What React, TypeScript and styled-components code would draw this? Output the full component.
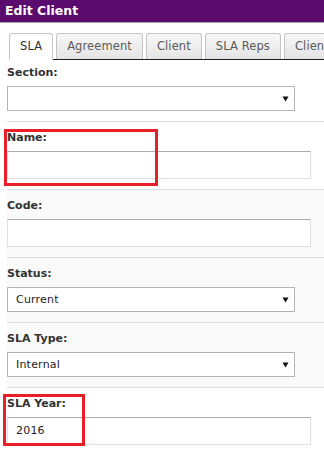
import React from 'react';
import styled, { createGlobalStyle } from 'styled-components';

const GlobalStyle = createGlobalStyle`
	body {
		margin: 0;
		background: #ffffff;
		font-family: 'DejaVu Sans', Verdana, sans-serif;
	}
`;

const Page = styled.div`
	width: 324px;
	height: 450px;
	overflow: hidden;
	background: #ffffff;
`;

const Header = styled.div`
	height: 22px;
	line-height: 22px;
	padding-left: 5px;
	background: #5a0b6e;
	border-bottom: 1px solid #a8a8a8;
	color: #ffffff;
	font-size: 12.5px;
	font-weight: bold;
`;

const TabBar = styled.div`
	display: flex;
	margin: 10px 0 0 9px;
	border-bottom: 1px solid #1e1e1e;
	white-space: nowrap;
`;

const Tab = styled.div<{ $active?: boolean }>`
	flex-shrink: 0;
	box-sizing: border-box;
	height: ${p => (p.$active ? '27px' : '26px')};
	margin-right: 3px;
	margin-bottom: ${p => (p.$active ? '-1px' : '0')};
	padding: 0 10px;
	line-height: 25px;
	font-size: 11.5px;
	letter-spacing: 0.1px;
	color: ${p => (p.$active ? '#333333' : '#5a5a5a')};
	background: ${p =>
		p.$active ? '#ffffff' : 'linear-gradient(#f7f7f7, #e4e4e4)'};
	border: 1px solid #c4c4c4;
	border-bottom: ${p => (p.$active ? '1px solid #ffffff' : 'none')};
	border-radius: 3px 3px 0 0;
`;

const Form = styled.div`
	padding-left: 7px;
`;

const Field = styled.div<{ $first?: boolean; $shade?: boolean }>`
	position: relative;
	padding: ${p => (p.$first ? '6px' : '9px')} 0 10px 0;
	border-bottom: 1px solid #dedede;
	background: ${p => (p.$shade ? '#fafafa' : '#ffffff')};
`;

const Label = styled.div`
	height: 14px;
	line-height: 14px;
	margin-bottom: 6px;
	font-size: 11px;
	font-weight: bold;
	color: #333333;
`;

const TextBox = styled.div`
	box-sizing: border-box;
	width: 304px;
	height: 28px;
	padding-left: 8px;
	line-height: 26px;
	font-size: 11px;
	letter-spacing: 0.2px;
	color: #222222;
	background: #ffffff;
	border: 1px solid #e0e0e0;
	border-top-color: #acacac;
`;

const SelectBox = styled.div`
	box-sizing: border-box;
	display: flex;
	align-items: center;
	justify-content: space-between;
	width: 288px;
	height: 25px;
	padding: 0 5px 0 8px;
	font-size: 11px;
	letter-spacing: 0.2px;
	color: #222222;
	background: #ffffff;
	border: 1px solid #b4b4b4;
`;

const Arrow = styled.svg`
	width: 7px;
	height: 7px;
	flex-shrink: 0;
`;

const Highlight = styled.div<{ $left: number; $top: number; $w: number; $h: number }>`
	position: absolute;
	left: ${p => p.$left}px;
	top: ${p => p.$top}px;
	width: ${p => p.$w}px;
	height: ${p => p.$h}px;
	box-sizing: border-box;
	border: 3px solid #e81f28;
	pointer-events: none;
`;

const tabs = ['SLA', 'Agreement', 'Client', 'SLA Reps', 'Clien'];

const Select = ({ value }: { value: string }) => (
	<SelectBox>
		<span>{value}</span>
		<Arrow viewBox="0 0 7 7">
			<path d="M0.5 1.5 L6.5 1.5 L3.5 6.5 Z" fill="#111111" />
		</Arrow>
	</SelectBox>
);

const App = () => {
	return (
		<Page>
			<GlobalStyle />
			<Header>Edit Client</Header>
			<TabBar>
				{tabs.map((t, i) => (
					<Tab key={t} $active={i === 0}>
						{t}
					</Tab>
				))}
			</TabBar>
			<Form>
				<Field $first>
					<Label>Section:</Label>
					<Select value="" />
				</Field>
				<Field>
					<Label>Name:</Label>
					<TextBox />
					<Highlight $left={-3} $top={7} $w={154} $h={57} />
				</Field>
				<Field $shade>
					<Label>Code:</Label>
					<TextBox />
				</Field>
				<Field $shade>
					<Label>Status:</Label>
					<Select value="Current" />
				</Field>
				<Field $shade>
					<Label>SLA Type:</Label>
					<Select value="Internal" />
				</Field>
				<Field>
					<Label>SLA Year:</Label>
					<TextBox>2016</TextBox>
					{/* 연도 강조 박스 */}
					<Highlight $left={-4} $top={6} $w={82} $h={52} />
				</Field>
			</Form>
		</Page>
	);
};

export default App;
